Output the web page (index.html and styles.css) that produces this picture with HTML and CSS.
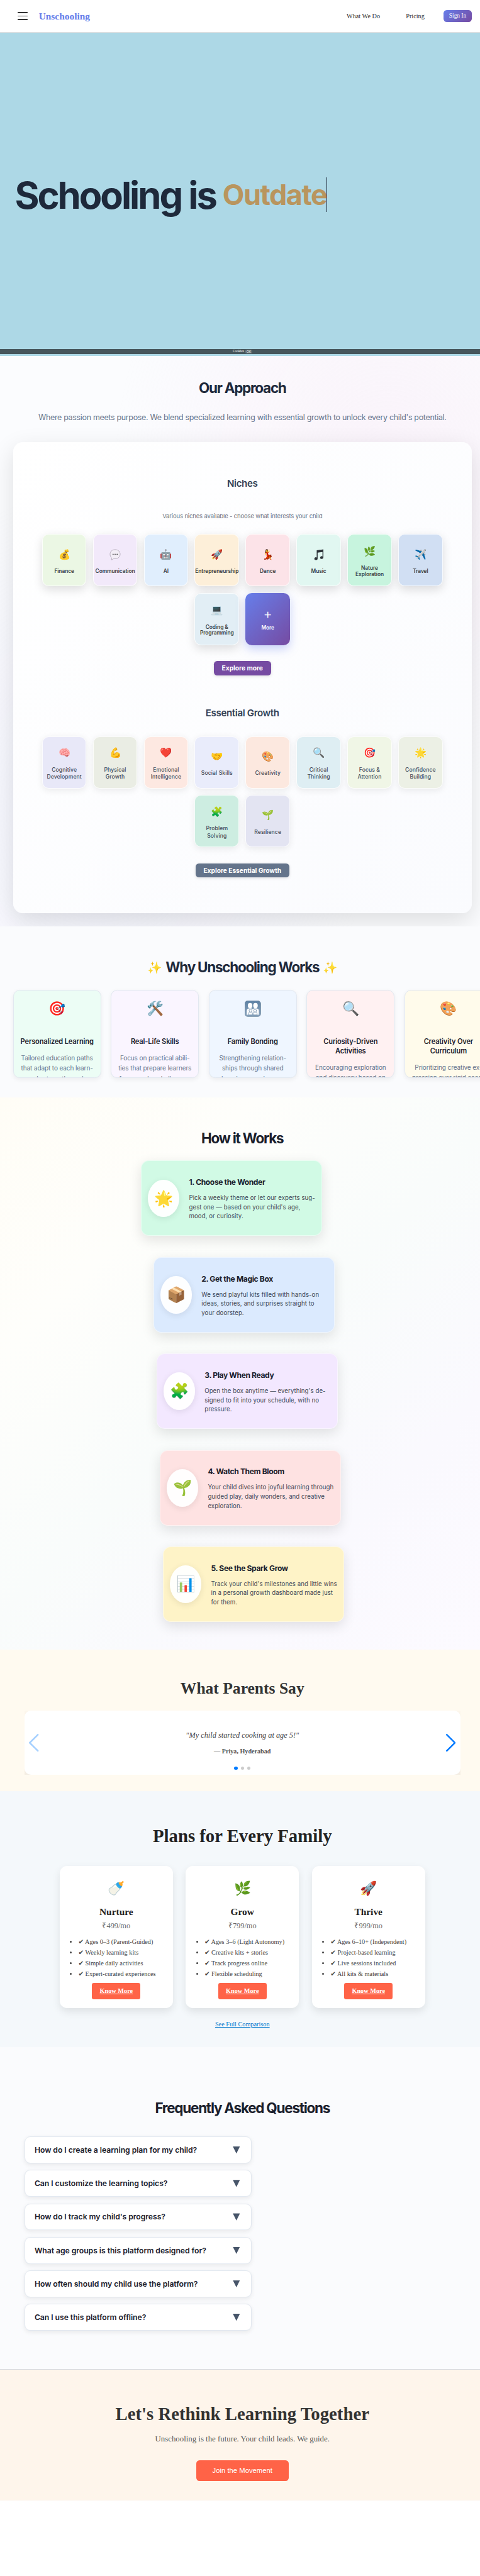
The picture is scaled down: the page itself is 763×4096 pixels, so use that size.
FILE: index.html
```
<!DOCTYPE html>
<html lang="en">
<head>
<meta charset="utf-8">
<title>Unschooling</title>
<link rel="stylesheet" href="styles.css">
</head>
<body>
<div class="page">
  <header class="header">
    <div class="burger"><i></i><i></i><i></i></div>
    <a class="logo">Unschooling</a>
    <nav class="nav"><a>What We Do</a><a class="pricing">Pricing</a><a class="signin">Sign In</a></nav>
  </header>

  <section class="hero">
    <h1 class="hero-title"><span class="hero-static">Schooling is</span><span class="hero-word">Outdate</span></h1>
    <div class="cookies">Cookies <button class="cookies-ok">OK</button></div>
  </section>

  <section class="approach">
    <h2 class="h2">Our Approach</h2>
    <p class="approach-sub">Where passion meets purpose. We blend specialized learning with essential growth to unlock every child's potential.</p>
    <div class="panel">
      <h3 class="h3">Niches</h3>
      <p class="panel-note">Various niches available - choose what interests your child</p>
      <div class="tiles">
        <div class="tile finance"><span class="emo">💰</span><b>Finance</b></div>
        <div class="tile comm"><svg class="emo" viewBox="0 0 28 28"><path d="M14 1.500c7.500 0 12.500 4.600 12.500 11.300S21.500 24 14 24c-1.300 0-2.500-.1-3.700-.4-1.200 1.700-3.600 3.100-5.800 3 1-1.300 1.400-3 1.100-4.700C3 19.900 1.500 16.800 1.500 12.800 1.500 6.100 6.500 1.500 14 1.500z" fill="#f3eef6" stroke="#a79fad" stroke-width="1.200"/><circle cx="9" cy="13" r="1.300" fill="#333"/><circle cx="14" cy="13" r="1.300" fill="#333"/><circle cx="19" cy="13" r="1.300" fill="#333"/></svg><b>Communication</b></div>
        <div class="tile ai"><span class="emo">🤖</span><b>AI</b></div>
        <div class="tile entre"><span class="emo">🚀</span><b>Entrepreneurship</b></div>
        <div class="tile dance"><span class="emo">💃</span><b>Dance</b></div>
        <div class="tile music"><svg class="emo" viewBox="0 0 28 28"><path d="M8.500 3.200 25 .8v20.400a4 3.300 0 1 1-2.200-3V7.300L10.700 9v15a4 3.300 0 1 1-2.200-3z" fill="#2c3238"/></svg><b>Music</b></div>
        <div class="tile nature"><span class="emo">🌿</span><b>Nature<br>Exploration</b></div>
        <div class="tile travel"><span class="emo">✈️</span><b>Travel</b></div>
        <div class="tile coding"><span class="emo">💻</span><b>Coding &amp;<br>Programming</b></div>
        <div class="tile more"><span class="plus">+</span><b>More</b></div>
      </div>
      <button class="explore purple">Explore more</button>
      <h3 class="h3 growth-title">Essential Growth</h3>
      <div class="tiles growth">
        <div class="tile cognitive"><span class="emo">🧠</span><b>Cognitive<br>Development</b></div>
        <div class="tile physical"><span class="emo">💪</span><b>Physical<br>Growth</b></div>
        <div class="tile emotional"><span class="emo">❤️</span><b>Emotional<br>Intelligence</b></div>
        <div class="tile social"><span class="emo">🤝</span><b>Social Skills</b></div>
        <div class="tile creativity"><span class="emo">🎨</span><b>Creativity</b></div>
        <div class="tile critical"><span class="emo">🔍</span><b>Critical<br>Thinking</b></div>
        <div class="tile focus"><span class="emo">🎯</span><b>Focus &amp;<br>Attention</b></div>
        <div class="tile confidence"><span class="emo">🌟</span><b>Confidence<br>Building</b></div>
        <div class="tile problem"><span class="emo">🧩</span><b>Problem<br>Solving</b></div>
        <div class="tile resilience"><span class="emo">🌱</span><b>Resilience</b></div>
      </div>
      <button class="explore slate">Explore Essential Growth</button>
    </div>
  </section>

  <section class="why">
    <h2 class="h2 why-title"><span class="spark">✨</span><span>Why Unschooling Works</span><span class="spark">✨</span></h2>
    <div class="why-row">
      <article class="why-card mint"><span class="why-ico">🎯</span><h4>Personalized Learning</h4><p>Tailored education paths<br>that adapt to each learn-<br>er's strengths and</p></article>
      <article class="why-card lilac"><span class="why-ico">🛠️</span><h4>Real-Life Skills</h4><p>Focus on practical abili-<br>ties that prepare learners<br>for everyday challenges.</p></article>
      <article class="why-card sky"><svg class="why-ico" viewBox="0 0 40 40"><defs><linearGradient id="fam" x1="0" y1="0" x2="0" y2="1"><stop offset="0" stop-color="#5d81a3"/><stop offset="1" stop-color="#8ba5be"/></linearGradient></defs><rect x=".5" y=".5" width="39" height="39" rx="7" fill="url(#fam)" stroke="#54708c"/><g fill="#fff"><ellipse cx="13.300" cy="12.500" rx="5.600" ry="6.500"/><ellipse cx="26.700" cy="12.500" rx="5.600" ry="6.500"/><path d="M5 35V25c0-4 3-6 8.300-6 4 0 5.700 1 6.700 2.500 1-1.500 2.700-2.500 6.700-2.500 5.300 0 8.300 2 8.300 6v10z"/></g><g fill="#fff" stroke="#6c8ba9" stroke-width="1.300"><path d="M9.500 35.500v-3.700c0-2.500 1.600-3.800 4.800-3.800s4.900 1.300 4.900 3.800v3.700zM20.800 35.500v-3.700c0-2.500 1.600-3.800 4.900-3.800s4.800 1.300 4.800 3.800v3.700z"/><circle cx="14.300" cy="25" r="3.500"/><circle cx="25.700" cy="25" r="3.500"/></g></svg><h4>Family Bonding</h4><p>Strengthening relation-<br>ships through shared<br>learning experiences.</p></article>
      <article class="why-card rose"><span class="why-ico">🔍</span><h4>Curiosity-Driven<br>Activities</h4><p>Encouraging exploration<br>and discovery based on</p></article>
      <article class="why-card cream"><span class="why-ico">🎨</span><h4>Creativity Over<br>Curriculum</h4><p>Prioritizing creative ex-<br>pression over rigid acad-</p></article>
    </div>
  </section>

  <section class="how">
    <h2 class="h2 ink">How it Works</h2>
    <div class="steps">
      <article class="step s1"><span class="step-ico">🌟</span><div class="step-text"><h4>1. Choose the Wonder</h4><p>Pick a weekly theme or let our experts sug-<br>gest one — based on your child's age,<br>mood, or curiosity.</p></div></article>
      <article class="step s2"><span class="step-ico">📦</span><div class="step-text"><h4>2. Get the Magic Box</h4><p>We send playful kits filled with hands-on<br>ideas, stories, and surprises straight to<br>your doorstep.</p></div></article>
      <article class="step s3"><span class="step-ico">🧩</span><div class="step-text"><h4>3. Play When Ready</h4><p>Open the box anytime — everything's de-<br>signed to fit into your schedule, with no<br>pressure.</p></div></article>
      <article class="step s4"><span class="step-ico">🌱</span><div class="step-text"><h4>4. Watch Them Bloom</h4><p>Your child dives into joyful learning through<br>guided play, daily wonders, and creative<br>exploration.</p></div></article>
      <article class="step s5"><span class="step-ico">📊</span><div class="step-text"><h4>5. See the Spark Grow</h4><p>Track your child's milestones and little wins<br>in a personal growth dashboard made just<br>for them.</p></div></article>
    </div>
  </section>

  <section class="parents">
    <h2 class="parents-title">What Parents Say</h2>
    <div class="swiper">
      <div class="slide">
        <svg class="arrow prev" viewBox="0 0 24 44"><path d="M22 2 2 22l20 20"/></svg>
        <div class="quote-box">
          <p class="quote">"My child started cooking at age 5!"</p>
          <p class="author">— Priya, Hyderabad</p>
          <div class="dots"><i class="on"></i><i></i><i></i></div>
        </div>
        <svg class="arrow next" viewBox="0 0 24 44"><path d="m2 2 20 20L2 42"/></svg>
      </div>
    </div>
  </section>

  <section class="plans">
    <h2 class="plans-title">Plans for Every Family</h2>
    <div class="plan-row">
      <article class="plan"><span class="plan-ico">🍼</span><h3>Nurture</h3><p class="price">₹499/mo</p>
        <ul><li><span class="ck">✔</span> Ages 0–3 (Parent-Guided)</li><li><span class="ck">✔</span> Weekly learning kits</li><li><span class="ck">✔</span> Simple daily activities</li><li><span class="ck">✔</span> Expert-curated experiences</li></ul><a class="know">Know More</a></article>
      <article class="plan"><span class="plan-ico">🌿</span><h3>Grow</h3><p class="price">₹799/mo</p>
        <ul><li><span class="ck">✔</span> Ages 3–6 (Light Autonomy)</li><li><span class="ck">✔</span> Creative kits + stories</li><li><span class="ck">✔</span> Track progress online</li><li><span class="ck">✔</span> Flexible scheduling</li></ul><a class="know">Know More</a></article>
      <article class="plan"><span class="plan-ico">🚀</span><h3>Thrive</h3><p class="price">₹999/mo</p>
        <ul><li><span class="ck">✔</span> Ages 6–10+ (Independent)</li><li><span class="ck">✔</span> Project-based learning</li><li><span class="ck">✔</span> Live sessions included</li><li><span class="ck">✔</span> All kits &amp; materials</li></ul><a class="know">Know More</a></article>
    </div>
    <a class="compare">See Full Comparison</a>
  </section>

  <section class="faq">
    <h2 class="h2 ink">Frequently Asked Questions</h2>
    <div class="faq-list">
      <div class="faq-item"><span>How do I create a learning plan for my child?</span><i></i></div>
      <div class="faq-item"><span>Can I customize the learning topics?</span><i></i></div>
      <div class="faq-item"><span>How do I track my child's progress?</span><i></i></div>
      <div class="faq-item"><span>What age groups is this platform designed for?</span><i></i></div>
      <div class="faq-item"><span>How often should my child use the platform?</span><i></i></div>
      <div class="faq-item"><span>Can I use this platform offline?</span><i></i></div>
    </div>
  </section>

  <section class="cta">
    <h2 class="cta-title">Let's Rethink Learning Together</h2>
    <p class="cta-sub">Unschooling is the future. Your child leads. We guide.</p>
    <button class="join">Join the Movement</button>
  </section>
</div>
</body>
</html>
```
FILE: styles.css
```
* { box-sizing: border-box; margin: 0; padding: 0; }
html { background: #fff; overflow-x: hidden; }
body { zoom: 0.6421; background: #fff; font-family: "Liberation Serif", "Times New Roman", serif; }
button { border: 0; font: inherit; }
.page { width: 1188.200px; height: 6378px; overflow: hidden; }
.page > * { width: 1200px; }

/* header */
.header { height: 81px; display: flex; align-items: center; padding: 0 32px 0 44px; background: #fff; border-bottom: 1px solid #e0e0e0; }
.burger { width: 24px; display: flex; flex-direction: column; gap: 5px; }
.burger i { height: 3px; background: #333; border-radius: 1px; }
.logo { margin-left: 28px; font-size: 24px; font-weight: 700; color: #667eea; }
.nav { margin-left: auto; display: flex; align-items: center; font-size: 16px; color: #333; }
.pricing { margin-left: 64px; }
.signin { margin-left: 47px; width: 70px; height: 31px; line-height: 31px; text-align: center; border-radius: 8px; font-size: 14.6px; color: #fff; background: linear-gradient(135deg, #667eea, #764ba2); }

/* hero */
.hero { height: 800px; background: #add8e6; display: flex; flex-direction: column; justify-content: space-between; }
.hero-title { display: flex; align-items: flex-start; gap: 17px; padding: 356px 0 0 36.5px; font: 700 93px/93px Inter, sans-serif; color: #1e293b; white-space: nowrap; }
.hero-static { letter-spacing: -4.7px; }
.hero-word { margin-top: 2px; height: 86px; line-height: 88px; font-size: 70px; letter-spacing: -2.3px; color: #b9955e; border-right: 2px solid #1e293b; }
.cookies { height: 12px; margin-bottom: 4px; background: #46565c; color: #fff; display: flex; align-items: center; justify-content: center; gap: 4px; font-size: 8.5px; line-height: 12px; }
.cookies-ok { width: 16px; height: 10px; border: 1px solid #6b787d; border-radius: 2px; background: #56656b; color: #fff; font: 8px/8px "Liberation Sans", sans-serif; }

/* shared headings */
.h2 { font: 700 35px/44px Inter, sans-serif; letter-spacing: -1.95px; color: #1e293b; text-align: center; white-space: nowrap; }
.ink { color: #1a202c; }
.h3 { font: 600 23.5px/30px Inter, sans-serif; letter-spacing: -0.55px; color: #334155; text-align: center; }

/* approach */
.approach { height: 1413px; overflow: hidden; padding: 58px 32px 0; background: radial-gradient(ellipse at 80% 20%, rgba(247, 222, 243, 0.32), transparent 50%), radial-gradient(ellipse at 20% 80%, rgba(222, 222, 250, 0.3), transparent 50%), #fbfcfe; }
.approach-sub { margin-top: 35px; font: 400 19.4px/30px Inter, sans-serif; letter-spacing: -0.48px; color: #64748b; text-align: center; white-space: nowrap; }
.panel { margin-top: 47.5px; height: 1166px; border-radius: 24px; padding-top: 87px; background: linear-gradient(135deg, #fff, #fafbfe); box-shadow: 0 20px 60px rgba(0, 0, 0, 0.12); display: flex; flex-direction: column; align-items: center; }
.panel-note { margin-top: 54.5px; font: 400 14.8px/24px Inter, sans-serif; letter-spacing: -0.24px; color: #6b7280; }
.tiles { margin-top: 31.5px; width: 1000px; display: flex; flex-wrap: wrap; justify-content: center; gap: 16px; }
.tile { width: 110px; height: 129.6px; border-radius: 16px; border: 1.5px solid rgba(255, 255, 255, 0.8); box-shadow: 0 8px 24px rgba(0, 0, 0, 0.13); display: flex; flex-direction: column; align-items: center; justify-content: center; font-family: Inter, sans-serif; padding-top: 8px; }
.tile b { margin-top: 21px; font-size: 13px; line-height: 15px; font-weight: 600; letter-spacing: -0.08px; color: #3a3f45; text-align: center; white-space: nowrap; }
.emo { width: 28px; height: 28px; font-size: 24px; line-height: 28px; display: flex; justify-content: center; }
.finance { background: #ebf7e4; }
.comm { background: #f2e9fa; }
.ai { background: #e0eefd; }
.entre { background: #fdefd9; }
.dance { background: #fce3e8; }
.music { background: #e1f7f1; }
.nature { background: #c7f4de; }
.travel { background: #d1dff3; }
.coding { background: #e2eef5; }
.more { background: linear-gradient(135deg, #667eea, #764ba2); border: 0; box-shadow: 0 8px 24px rgba(102, 126, 234, 0.35); padding: 0; }
.tile.more b { margin-top: 8.5px; color: #fff; }
.plus { font-size: 34px; line-height: 36px; color: #fff; font-weight: 300; }
.explore { margin-top: 40px; height: 35px; padding: 0 20px; border-radius: 8px; color: #fff; font: 700 16px/35px Inter, sans-serif; letter-spacing: -0.08px; box-shadow: 0 2px 8px rgba(0, 0, 0, 0.12); }
.purple { background: #764ba2; }
.slate { background: #64748b; }
.growth-title { margin-top: 78.5px; }
.growth { margin-top: 42px; }
.growth .tile { box-shadow: 0 4px 16px rgba(0, 0, 0, 0.08); padding-top: 9px; }
.growth .tile b { margin-top: 19.5px; font-weight: 500; font-size: 13.4px; line-height: 18px; letter-spacing: 0.14px; color: #414a5a; }
.cognitive { background: #e8e8f8; }
.physical { background: #eaede4; }
.emotional { background: #fde8e1; }
.social { background: #e9ecfb; }
.creativity { background: #fce8df; }
.critical { background: #deeef3; }
.focus { background: #f0f6e6; }
.confidence { background: #ecf0e5; }
.problem { background: #cdede1; }
.resilience { background: #e3e4f2; }

/* why */
.why { height: 423px; padding: 80px 0 0 32px; background: #fafbfd; overflow: hidden; }
.why-title { display: flex; justify-content: center; gap: 9px; margin-left: -32px; }
.spark { font-size: 29px; letter-spacing: 0; }
.why-row { margin-top: 33px; display: flex; gap: 24px; }
.why-card { flex: none; width: 218.300px; height: 217.700px; overflow: hidden; border-radius: 16px; border: 1px solid #e2e8f0; box-shadow: 0 4px 12px rgba(0, 0, 0, 0.06); padding-top: 26px; display: flex; flex-direction: column; align-items: center; text-align: center; font-family: Inter, sans-serif; white-space: nowrap; }
.why-ico { flex: none; display: flex; justify-content: center; width: 40px; height: 40px; font-size: 34px; line-height: 40px; }
.why-card h4 { margin-top: 49.500px; font-size: 17.2px; line-height: 23px; font-weight: 600; letter-spacing: -0.2px; color: #1a202c; }
.why-card p { margin-top: 16px; font-size: 15.6px; line-height: 25.4px; letter-spacing: -0.16px; color: #64748b; }
.mint { background: #ecfdf5; }
.lilac { background: #faf5ff; }
.sky { background: #eff6ff; }
.rose { background: #fff1f2; }
.cream { background: #fffbeb; }

/* how */
.how { height: 1368px; padding-top: 80px; background: linear-gradient(135deg, #fffdf6 0%, #fefefb 25%, #f9fcfb 50%, #faf9fe 75%, #fcfaff 100%); }
.steps { margin-top: 33px; display: flex; flex-direction: column; gap: 52px; }
.step { width: 448px; height: 187px; border-radius: 20px; border: 1px solid rgba(255, 255, 255, 0.5); box-shadow: 0 10px 32px rgba(0, 0, 0, 0.11); padding-left: 15px; display: flex; align-items: center; gap: 24px; font-family: Inter, sans-serif; }
.s1 { margin-left: 349.500px; background: #d1fae5; }
.s2 { margin-left: 380.300px; background: #dbeafe; }
.s3 { margin-left: 388px; background: #f3e8ff; }
.s4 { margin-left: 396px; background: #fee2e2; }
.s5 { margin-left: 404px; background: #fef3c7; }
.step-ico { flex: none; width: 78px; height: 93px; border-radius: 50%; background: rgba(255, 255, 255, 0.95); box-shadow: 0 4px 16px rgba(0, 0, 0, 0.09); display: flex; align-items: center; justify-content: center; font-size: 38px; line-height: 46px; }
.step-text { white-space: nowrap; padding-top: 5px; }
.step h4 { font-size: 18.8px; line-height: 25px; font-weight: 700; letter-spacing: -0.57px; color: #1a202c; }
.step p { margin-top: 15.500px; font-size: 15px; line-height: 22.700px; letter-spacing: 0.1px; color: #3f4857; }

/* parents */
.parents { height: 350px; padding: 73px 60px 0; background: #fffaf0; }
.parents-title { font-size: 39.800px; line-height: 46px; color: #333; text-align: center; }
.swiper { margin-top: 31.500px; height: 160px; background: linear-gradient(#fcf6ec, #f4ede3); }
.slide { height: 160px; border-radius: 16px; background: #fff; padding: 0 12px; display: flex; align-items: center; justify-content: space-between; }
.arrow { width: 24px; height: 44px; fill: none; stroke: #007aff; stroke-width: 4; stroke-linecap: round; }
.prev { opacity: 0.35; }
.quote-box { height: 160px; padding-top: 50px; display: flex; flex-direction: column; align-items: center; }
.quote { font-size: 19.2px; line-height: 24px; font-style: italic; color: #444; }
.author { margin-top: 18.500px; font-size: 15.8px; line-height: 20px; font-weight: 700; color: #555; }
.dots { margin-top: 27px; display: flex; gap: 8px; }
.dots i { width: 8px; height: 8px; border-radius: 50%; background: #ccc; }
.dots .on { background: #007aff; }

/* plans */
.plans { height: 634px; padding-top: 85.500px; background: #f4f8fb; display: flex; flex-direction: column; align-items: center; }
.plans-title { font-size: 44.800px; line-height: 52px; color: #222; }
.plan-row { margin-top: 48px; display: flex; gap: 32.200px; }
.plan { width: 280px; height: 351.600px; padding-top: 38px; border-radius: 18px; background: #fff; box-shadow: 0 8px 20px rgba(0, 0, 0, 0.09); display: flex; flex-direction: column; align-items: center; }
.plan-ico { width: 40px; height: 40px; display: flex; justify-content: center; font-size: 34px; line-height: 40px; }
.plan h3 { margin-top: 22.500px; font-size: 24px; line-height: 28px; color: #222; }
.price { margin-top: 9px; font-size: 19.2px; line-height: 24px; color: #666; }
.plan ul { margin-top: 13px; width: 100%; padding-left: 46px; font-size: 16px; line-height: 26.800px; color: #444; white-space: nowrap; }
.plan li { height: 26.800px; }
.ck { font-family: "DejaVu Sans", sans-serif; font-size: 16px; line-height: 20px; }
.know { margin-top: 8px; width: 120px; height: 41px; line-height: 41px; border-radius: 5px; background: #ff6347; color: #fff; font-weight: 700; font-size: 16px; text-align: center; text-decoration: underline; }
.compare { margin-top: 32px; font-size: 16px; line-height: 20px; color: #0077cc; text-decoration: underline; }

/* faq */
.faq { height: 800px; padding-top: 130px; background: #fafbfd; border-bottom: 2.500px solid #d9dbdf; }
.faq-list { margin: 48px 0 0 60px; width: 562.500px; display: flex; flex-direction: column; gap: 16.400px; }
.faq-item { height: 66.500px; padding: 0 27px 0 24px; border: 1px solid #e2e8f0; border-radius: 14px; background: #fff; box-shadow: 0 4px 12px rgba(0, 0, 0, 0.07); display: flex; align-items: center; justify-content: space-between; font: 600 19px/24px Inter, sans-serif; letter-spacing: -0.07px; color: #1a202c; }
.faq-item i { width: 17.500px; height: 17.500px; background: #475569; clip-path: polygon(0 0, 100% 0, 50% 100%); }

/* call to action */
.cta { height: 323px; padding-top: 84px; background: #fef5eb; display: flex; flex-direction: column; align-items: center; }
.cta-title { font-size: 44.800px; line-height: 52px; color: #333; }
.cta-sub { margin-top: 24px; font-size: 20px; line-height: 24px; color: #555; }
.join { margin-top: 39px; width: 229px; height: 52px; border-radius: 8px; background: #ff6347; color: #fff; font: 17.600px/52px "Liberation Sans", Arial, sans-serif; text-align: center; }
```
